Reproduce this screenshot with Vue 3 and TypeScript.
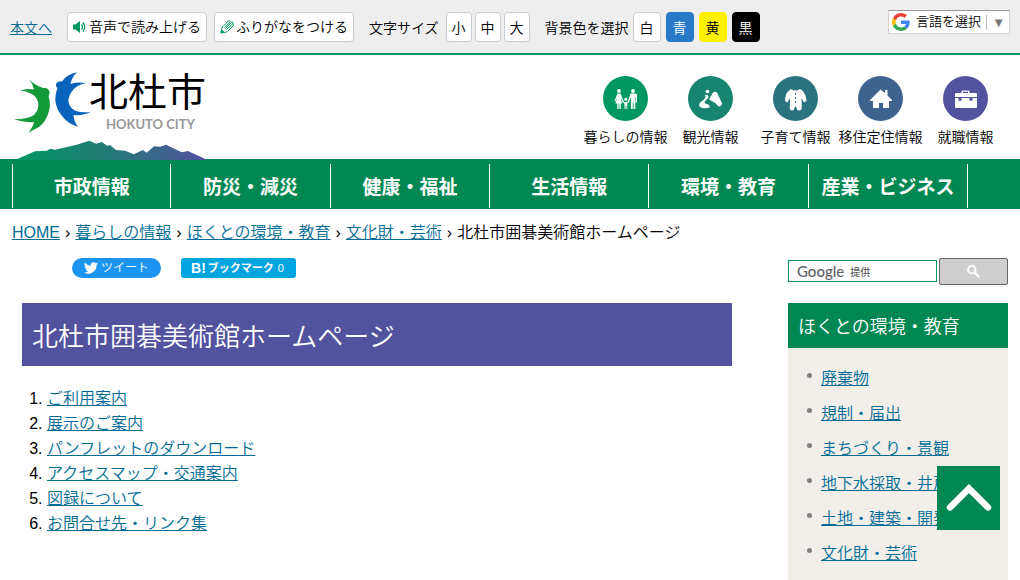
<script setup lang="ts">
interface Quick { label: string; icon: string; color: string }

const sizes: string[] = ['小', '中', '大']
const colors = [
  { label: '白', cls: 'white' },
  { label: '青', cls: 'blue' },
  { label: '黄', cls: 'yellow' },
  { label: '黒', cls: 'black' },
]
const quicks: Quick[] = [
  { label: '暮らしの情報', icon: 'family', color: '#009860' },
  { label: '観光情報', icon: 'sight', color: '#188570' },
  { label: '子育て情報', icon: 'child', color: '#2b747f' },
  { label: '移住定住情報', icon: 'house', color: '#3e638f' },
  { label: '就職情報', icon: 'job', color: '#53529f' },
]
const navItems: string[] = ['市政情報', '防災・減災', '健康・福祉', '生活情報', '環境・教育', '産業・ビジネス']
const crumbs: string[] = ['HOME', '暮らしの情報', 'ほくとの環境・教育', '文化財・芸術']
const contents: string[] = ['ご利用案内', '展示のご案内', 'パンフレットのダウンロード', 'アクセスマップ・交通案内', '図録について', 'お問合せ先・リンク集']
const sideItems: string[] = ['廃棄物', '規制・届出', 'まちづくり・景観', '地下水採取・井戸', '土地・建築・開発', '文化財・芸術']
</script>

<template>
  <div class="page">
    <div class="tools">
      <a class="skip" href="#main">本文へ</a>
      <button class="tool wide" type="button">
        <svg width="14" height="14" viewBox="0 0 14 14" aria-hidden="true">
          <path d="M0 4.500h2.500L7 1v12L2.500 9.500H0z" fill="#009860" />
          <path d="M8.500 4.500q2 2.500 0 5M10 2.500q3.500 4.500 0 9" fill="none" stroke="#009860" stroke-width="1.300" />
        </svg>
        <span>音声で読み上げる</span>
      </button>
      <button class="tool wide" type="button">
        <svg width="14" height="14" viewBox="0 0 14 14" aria-hidden="true">
          <path d="M1.500 9.500 2.500 7 8.500.8Q10 0 10.300 1.500L4.500 7.800M6.500 9.500 13 3.500Q14.200 4.500 13 6L7.500 11.500 4.500 12.700M5.500 8.700 11.800 1.800Q13.200 2 13 3.500" fill="none" stroke="#009860" stroke-width="1" stroke-linejoin="round" />
          <path d="M.2 13.800 1.500 9 5 12.600z" fill="#009860" />
        </svg>
        <span>ふりがなをつける</span>
      </button>
      <div class="group" role="group" aria-labelledby="size-label">
        <span id="size-label" class="group-label size-label">文字サイズ</span>
        <div class="sizes"><button v-for="s in sizes" :key="s" class="tool small" type="button">{{ s }}</button></div>
      </div>
      <div class="group" role="group" aria-labelledby="color-label">
        <span id="color-label" class="group-label">背景色を選択</span>
        <div class="colors"><button v-for="c in colors" :key="c.cls" class="tool swatch" :class="c.cls" type="button">{{ c.label }}</button></div>
      </div>
      <button class="language" type="button">
        <svg width="18" height="18" viewBox="0 0 48 48" aria-hidden="true">
          <path fill="#ea4335" d="M24 9.500c3.540 0 6.710 1.220 9.210 3.600l6.850-6.850C35.900 2.380 30.470 0 24 0 14.620 0 6.510 5.380 2.560 13.220l7.980 6.190C12.430 13.720 17.740 9.500 24 9.500z" />
          <path fill="#4285f4" d="M46.980 24.550c0-1.570-.15-3.090-.38-4.550H24v9.020h12.940c-.58 2.960-2.260 5.480-4.780 7.180l7.730 6c4.510-4.180 7.090-10.360 7.090-17.650z" />
          <path fill="#fbbc05" d="M10.530 28.590c-.48-1.450-.76-2.990-.76-4.590s.27-3.140.76-4.590l-7.980-6.190C.92 16.460 0 20.120 0 24s.92 7.540 2.560 10.780l7.970-6.190z" />
          <path fill="#34a853" d="M24 48c6.480 0 11.930-2.130 15.890-5.810l-7.730-6c-2.150 1.450-4.920 2.300-8.160 2.300-6.260 0-11.570-4.220-13.470-9.910l-7.980 6.190C6.510 42.620 14.620 48 24 48z" />
        </svg>
        <span class="language-text">言語を選択</span>
        <span class="language-arrow">▼</span>
      </button>
    </div>

    <header class="header">
      <a class="logo" href="#" aria-label="北杜市">
        <svg width="194" height="92" viewBox="0 0 194 92" role="img" aria-label="北杜市 HOKUTO CITY">
          <defs>
            <linearGradient id="ridge" x1="0" x2="1" y1="0" y2="0">
              <stop offset="0" stop-color="#00975f" /><stop offset=".5" stop-color="#247a78" /><stop offset="1" stop-color="#53529f" />
            </linearGradient>
          </defs>
          <path fill="#13993a" d="M15 9Q20 15 29 18Q33 17 35.500 21Q36 24 34.500 26Q37 34 35 41Q32 52 25 57Q19 60 14.300 63Q19 57 20 52Q10 53 0 49.300Q15 49 20 45Q25 40 24.300 33Q23 27 18.500 24.500Q13 21 6 20.700Q12 18 20 19.500Q19 14 15 9Z" />
          <path fill="#0863bb" d="M63 2.300Q58 7 56.500 14Q64 11.500 71.300 13.300Q62 15 57.500 22Q53 29 55 34Q57 39 62 41Q69 43 77 41.700Q69 46 59.500 45Q60 52 64 56.700Q54 54 48 46Q42 39 41.300 30Q41 24 43.500 18Q41 16 42.500 13Q45 10.500 48 11.500Q53 4 63 2.300Z" />
          <text class="logo-name" x="75" y="36">北杜市</text>
          <text class="logo-city" x="92" y="59">HOKUTO CITY</text>
          <path fill="url(#ridge)" d="M0 90 2.700 89.300 21 81.300 33 80.700 36 78.700 41 79.700 62.700 74.700 75.300 70.700 82 73.700 87.700 72 93 75.700 96 75 102 80 111 80.700 120 84.300 128.700 80 132.700 82.700 140 76.300 146 76.700 152 74.700 167.700 82.300 174 81 192.300 89.500V90Z" />
        </svg>
      </a>
      <nav class="quick" aria-label="目的別">
        <a v-for="q in quicks" :key="q.icon" href="#">
          <svg width="45" height="45" viewBox="0 0 45 45" aria-hidden="true">
            <circle cx="22.500" cy="22.500" r="22.500" :fill="q.color" />
            <g v-if="q.icon === 'family'" fill="#fff">
              <circle cx="16" cy="15" r="1.900" /><circle cx="30" cy="15" r="1.900" /><circle cx="22.800" cy="23.300" r="1.500" />
              <path d="M14.500 17.500h3L20.500 25l-1 .5-2-4 1.500 6h-1.200v5.500h-1.400v-5.500h-.8v5.500h-1.400v-5.500H12.500l1.700-6-1.700 4-1-.5zM27.500 17.500h5.200q1.300 0 1.300 1.500v7.500h-1.300V21h-.4v12h-1.800v-6.500h-.8V33h-1.800V21l-2.200 5.500-1-.5zM19.500 24.700l2.200 1.300h2.300l2-1.500.6.8-2.300 2.200v5.500h-1v-3h-.8v3h-1V27.500L18.800 25.700z" />
            </g>
            <g v-else-if="q.icon === 'sight'" fill="#fff">
              <circle cx="19.500" cy="15.500" r="1.800" />
              <path d="M21 23.500 25 16.500Q26.500 15 29 16.500L34 27.500Q34 30 30.500 30.500Q27 26 21 23.500ZM17 19Q20 18 20.500 20.500Q20.500 22 18 24Q15 27 18.500 28Q22.500 29 21.500 31.500Q13 33.500 11 29.500Q11 26.500 15.500 24Q18.500 21 17 19Z" />
            </g>
            <path v-else-if="q.icon === 'child'" fill="#fff" fill-rule="evenodd" d="M18 13Q22.500 16 27 13L30 15Q33 19 33.500 25L31 26.500 28.500 22 28.800 31Q29 34.500 26 34.500Q24 34.500 23.500 32L22.500 30 21.500 32Q21 34.500 19 34.500Q16.500 34.500 16.800 31L17 22 14.500 26.500 12 25Q12 18 15.500 15ZM22 17v2h1v-2zM22 21v2h1v-2zM22 25v2h1v-2z" />
            <path v-else-if="q.icon === 'house'" fill="#fff" d="M22.500 13.500 27 17V14h2.500v5.500L34 24v1h-3v7h-6v-5h-4v5h-6v-7h-3v-1z" />
            <path v-else fill="#fff" fill-rule="evenodd" d="M18.500 17V15.500Q18.500 14.500 19.500 14.500h5.500Q26.500 14.500 26.500 15.500V17h6.500q1 0 1 1v3H12v-3q0-1 1-1zM20 17h5v-1.200H20zM12 22h3.500v2.700h3V22h8v2.700h3V22H34v9q0 1-1 1H13q-1 0-1-1z" />
          </svg>
          <span>{{ q.label }}</span>
        </a>
      </nav>
    </header>

    <nav class="main-nav" aria-label="メイン">
      <ul>
        <li v-for="n in navItems" :key="n"><a href="#">{{ n }}</a></li>
      </ul>
    </nav>

    <nav class="crumbs" aria-label="パンくず">
      <template v-for="c in crumbs" :key="c"><a href="#">{{ c }}</a><span class="sep">›</span></template>
      <span>北杜市囲碁美術館ホームページ</span>
    </nav>

    <div class="body">
      <main id="main">
        <div class="social">
          <a class="tweet" href="#">
            <svg width="14" height="12" viewBox="0 0 24 20" aria-hidden="true">
              <path fill="#fff" d="M24 2.400a10 10 0 0 1-2.800.8A5 5 0 0 0 23.300.500a10 10 0 0 1-3.100 1.200 4.900 4.900 0 0 0-8.400 4.500A14 14 0 0 1 1.700 1a4.900 4.900 0 0 0 1.500 6.600 5 5 0 0 1-2.200-.6 4.900 4.900 0 0 0 3.900 4.900 5 5 0 0 1-2.200.1 4.900 4.900 0 0 0 4.600 3.400A10 10 0 0 1 0 17.500 14 14 0 0 0 21.500 5 10 10 0 0 0 24 2.400z" />
            </svg>
            <span>ツイート</span>
          </a>
          <a class="bookmark" href="#"><b class="hatena">B!</b><b>ブックマーク</b><span>0</span></a>
        </div>
        <h1>北杜市囲碁美術館ホームページ</h1>
        <ol class="contents">
          <li v-for="c in contents" :key="c"><a href="#">{{ c }}</a></li>
        </ol>
      </main>

      <aside>
        <form class="search" @submit.prevent>
          <div class="field">
            <input id="q" type="text" />
            <label for="q"><span class="brand">Google</span><span class="by">提供</span></label>
          </div>
          <button type="submit" aria-label="検索">
            <svg width="13" height="13" viewBox="0 0 13 13" aria-hidden="true">
              <circle cx="4.800" cy="4.800" r="3.700" fill="none" stroke="#fff" stroke-width="2" />
              <path d="m7.800 7.800 4.500 4.500" stroke="#fff" stroke-width="2.200" />
            </svg>
          </button>
        </form>
        <h2>ほくとの環境・教育</h2>
        <ul class="side-list">
          <li v-for="s in sideItems" :key="s"><a href="#">{{ s }}</a></li>
        </ul>
      </aside>
    </div>

    <a class="to-top" href="#" aria-label="ページの先頭へ">
      <svg width="46" height="28" viewBox="0 0 46 28" aria-hidden="true">
        <path d="M4 23.500 23 4.500l19 19" fill="none" stroke="#fff" stroke-width="6.500" stroke-linecap="round" />
      </svg>
    </a>
  </div>
</template>

<style>
body {
  margin: 0;
  background: #fff;
}
</style>

<style scoped>
* {
  box-sizing: border-box;
}
.page {
  display: flex;
  flex-direction: column;
  min-height: 100vh;
  color: #000;
  font: 350 16px/25px "Liberation Sans", "Noto Sans CJK JP", sans-serif;
}
a {
  color: #006c96;
}
button {
  font: inherit;
  color: inherit;
  padding: 0;
  cursor: pointer;
}
ul, ol, h1, h2 {
  margin: 0;
  padding: 0;
}
.tools {
  display: flex;
  align-items: center;
  min-height: 55px;
  padding: 0 10px;
  border-bottom: 2px solid #009860;
  background: #eee;
  font-size: 14px;
  line-height: 28px;
}
.skip,
.group-label {
  padding-top: 2px;
}
.skip {
  margin-right: 15px;
}
.tool {
  height: 30px;
  padding-top: 1px;
  border: 1px solid #c5cdd8;
  border-radius: 4px;
  background: #fff;
}
.wide {
  display: flex;
  align-items: center;
  gap: 2px;
  margin-right: 7px;
  padding: 1px 5px 0;
}
.wide svg {
  flex: none;
}
.group {
  display: flex;
  align-items: center;
  margin-left: 8px;
  margin-right: 7px;
}
.group-label {
  margin-right: 4px;
}
.size-label {
  margin-right: 7px;
}
.sizes {
  display: flex;
  gap: 3px;
}
.colors {
  display: flex;
  gap: 5px;
}
.small {
  width: 26px;
}
.swatch {
  width: 28px;
}
.blue {
  border-color: #2879c8;
  background: #2879c8;
  color: #fff;
}
.yellow {
  border-color: #fff100;
  background: #fff100;
}
.black {
  border-color: #000;
  background: #000;
  color: #fff;
}
.language {
  display: flex;
  align-items: center;
  align-self: flex-start;
  height: 24px;
  margin-top: 10px;
  margin-left: auto;
  padding: 0 4px 0 3px;
  border: 1px solid #d5d5d5;
  border-top-color: #9b9b9b;
  background: #fff;
  font-size: 13px;
  line-height: 22px;
}
.language-text {
  margin: 0 5px 0 6px;
}
.language-arrow {
  padding-left: 5px;
  border-left: 1px solid #bbb;
  color: #767676;
  line-height: 15px;
}
.header {
  display: flex;
  justify-content: space-between;
  height: 104px;
  padding: 15px 12px 0 14px;
}
.logo {
  position: relative;
  z-index: 1;
  height: 92px;
}
.logo svg {
  display: block;
  overflow: visible;
}
.logo-name {
  font: 39px "Noto Sans CJK JP", sans-serif;
  fill: #000;
}
.logo-city {
  font: bold 13px Lato, sans-serif;
  fill: #999;
}
.quick {
  display: grid;
  grid-template-columns: repeat(5, 85px);
  padding-top: 6px;
}
.quick a {
  display: flex;
  flex-direction: column;
  align-items: center;
  color: #000;
  font-size: 14px;
  line-height: 22px;
  white-space: nowrap;
  text-decoration: none;
}
.quick svg {
  margin-bottom: 5px;
}
.main-nav {
  padding: 5px 12px 1px;
  background: #008752;
}
.main-nav ul {
  display: flex;
  list-style: none;
}
.main-nav li {
  flex: 0 0 16%;
  border-right: 1px solid #fff;
}
.main-nav li:first-child {
  border-left: 1px solid #fff;
}
.main-nav a {
  display: block;
  padding-top: 4px;
  color: #fff;
  font-size: 19px;
  font-weight: bold;
  line-height: 40px;
  text-align: center;
  text-decoration: none;
  white-space: nowrap;
}
.crumbs {
  padding: 12px 12px 0;
  line-height: 24px;
}
.sep {
  margin: 0 5px;
}
.body {
  display: flex;
  flex: 1;
  justify-content: space-between;
  padding: 13px 12px 0 22px;
}
main {
  flex: 1;
  max-width: 710px;
}
.social {
  display: flex;
  gap: 20px;
  height: 45px;
  padding-left: 50px;
}
.social a {
  display: flex;
  align-items: center;
  height: 20px;
  color: #fff;
  text-decoration: none;
}
.tweet {
  gap: 3px;
  padding: 0 12px;
  border-radius: 10px;
  background: #1b95f1;
  font-size: 12px;
}
.bookmark {
  width: 115px;
  padding-left: 10px;
  border-radius: 3px;
  background: #00a4de;
  font-size: 11px;
}
.bookmark b {
  font-weight: 700;
}
.bookmark .hatena {
  margin-right: 2px;
  font-size: 14px;
}
.bookmark span {
  margin-left: 4px;
}
h1 {
  padding: 6px 10px 0;
  background: #53529f;
  color: #fff;
  font-size: 26px;
  font-weight: 350;
  line-height: 57px;
}
.contents {
  padding: 20px 0 0 25px;
}
aside {
  display: flex;
  flex: 0 0 220px;
  flex-direction: column;
}
.search {
  display: flex;
  gap: 2px;
  height: 45px;
}
.field {
  position: relative;
  flex: 1;
  height: 22px;
  margin-top: 2px;
}
.field input {
  display: block;
  width: 100%;
  height: 22px;
  border: 1px solid #009860;
}
.field label {
  position: absolute;
  top: 1px;
  left: 9px;
  display: flex;
  gap: 6px;
  color: #5f6368;
  line-height: 20px;
}
.brand {
  font: 500 15px/20px Lato, sans-serif;
}
.by {
  font-size: 10px;
  font-weight: 500;
  line-height: 23px;
}
.search button {
  display: flex;
  align-items: center;
  justify-content: center;
  width: 69px;
  height: 27px;
  border: 1px solid #666;
  border-radius: 2px;
  background: #cecece;
}
h2 {
  padding: 4px 10px 0;
  background: #008752;
  color: #fff;
  font-size: 18px;
  font-weight: 350;
  line-height: 41px;
}
.side-list {
  flex: 1;
  padding: 13px 0 0 19px;
  background: #f2efea;
  list-style: none;
}
.side-list li {
  display: flex;
  gap: 9px;
  line-height: 35px;
}
.side-list li::before {
  content: "";
  width: 5px;
  height: 5px;
  margin-top: 12px;
  border-radius: 50%;
  background: #808080;
}
.to-top {
  position: fixed;
  right: 20px;
  bottom: 50px;
  display: flex;
  align-items: center;
  justify-content: center;
  width: 63px;
  height: 64px;
  background: #008752;
}
</style>
